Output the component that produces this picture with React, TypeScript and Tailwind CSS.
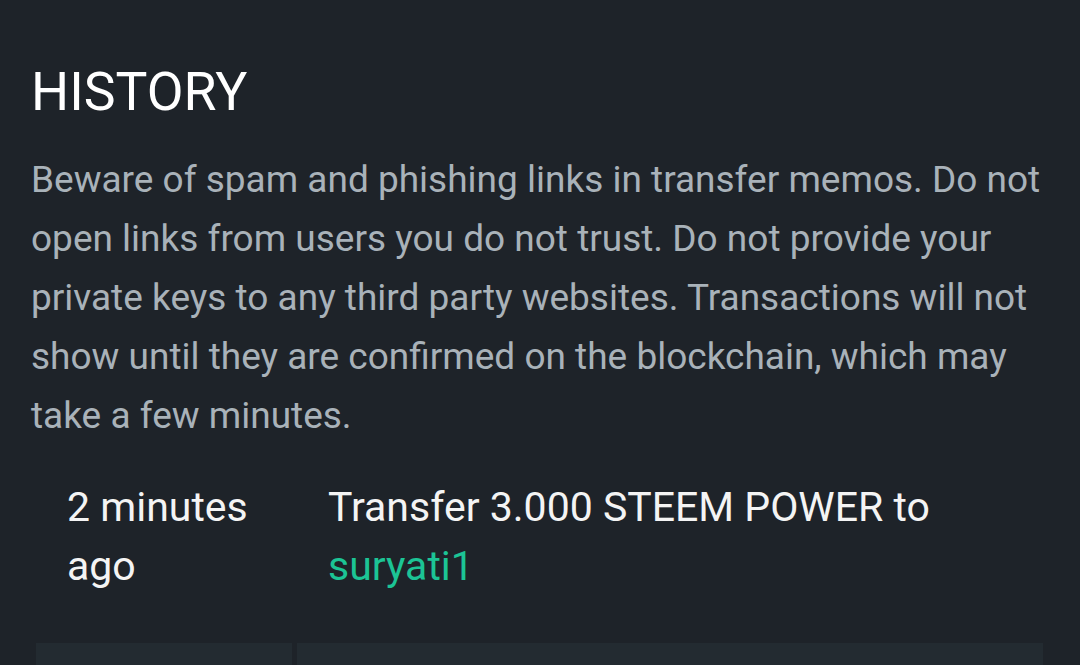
import React from "react";

export default function App() {
  return (
    <div
      className="w-[1080px] h-[665px] overflow-hidden bg-[#1e2329]"
      style={{ fontFamily: "Roboto, 'Liberation Sans', sans-serif" }}
    >
      <div className="pl-[31px] pr-[30px] pt-[60px]">
        <h1 className="text-[53.5px] leading-[64px] text-white font-normal">HISTORY</h1>
        <p className="mt-[26px] text-[37px] leading-[59px] text-[#a9b2b9]">
          Beware of spam and phishing links in transfer memos. Do not open links from users you do not trust. Do not provide your private keys to any third party websites. Transactions will not show until they are confirmed on the blockchain, which may take a few minutes.
        </p>
      </div>
      <div className="mt-[33px] pl-[36px] pr-[37px] flex flex-col">
        <div className="flex gap-[5px]">
          <div className="w-[256px] pl-[31px] pr-[10px] text-[41px] leading-[59px] text-[#f4f4f4]">2 minutes ago</div>
          <div className="flex-1 pl-[31px] pr-[20px] text-[41px] leading-[59px] text-[#f4f4f4]">
            Transfer 3.000 STEEM POWER to
            <br />
            <span className="text-[#1cc495]">suryati1</span>
          </div>
        </div>
        <div className="mt-[47px] flex gap-[5px]">
          <div className="w-[256px] h-[80px] bg-[#232b31]"></div>
          <div className="flex-1 h-[80px] bg-[#232b31]"></div>
        </div>
      </div>
    </div>
  );
}
